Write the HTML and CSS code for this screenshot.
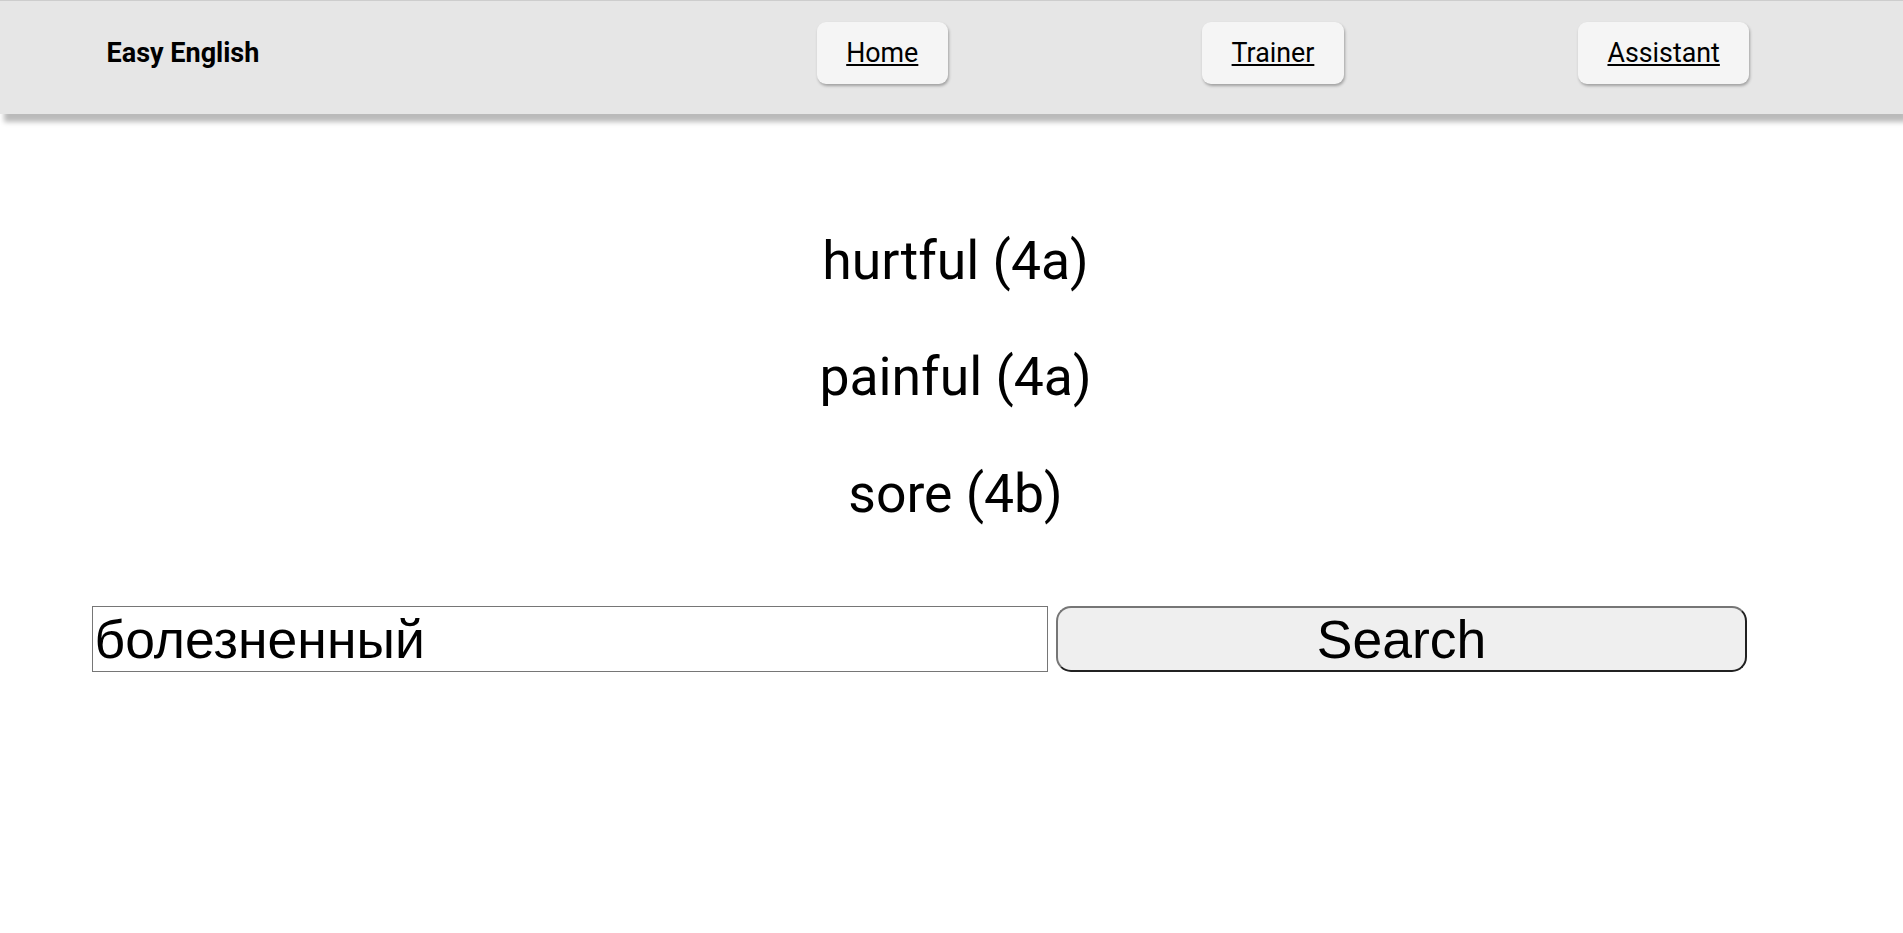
FILE: index.html
```html
<!DOCTYPE html>
<html lang="en">
<head>
<meta charset="utf-8">
<title>Easy English</title>
<link rel="stylesheet" href="styles.css">
</head>
<body>
<header class="topbar">
  <div class="logo">Easy English</div>
  <ul class="nav">
    <li class="nav-item"><a class="nav-btn" href="#">Home</a></li>
    <li class="nav-item"><a class="nav-btn" href="#">Trainer</a></li>
    <li class="nav-item"><a class="nav-btn" href="#">Assistant</a></li>
  </ul>
</header>
<main class="content">
  <div class="words">
    <p class="word">hurtful (4a)</p>
    <p class="word">painful (4a)</p>
    <p class="word">sore (4b)</p>
  </div>
  <form class="search" onsubmit="return false">
    <input class="search-input" type="text" value="болезненный">
    <button class="search-btn" type="submit">Search</button>
  </form>
</main>
</body>
</html>
```
FILE: styles.css
```css
html, body {
  margin: 0;
  padding: 0;
  background: #ffffff;
}

body {
  font-family: Roboto, "Noto Sans", sans-serif;
  color: #000;
}

.topbar {
  display: flex;
  align-items: center;
  justify-content: space-between;
  box-sizing: border-box;
  height: 114px;
  padding: 21px 44px 31px 106.5px;
  background: #e6e6e6;
  border-top: 1px solid #cdcdcd;
  box-shadow: 4px 8px 5px rgba(0, 0, 0, 0.27);
}

.logo {
  font-family: Roboto, sans-serif;
  font-weight: 700;
  font-size: 27px;
  line-height: normal;
}

.nav {
  display: grid;
  grid-template-columns: repeat(3, 390.7px);
  justify-items: center;
  margin: 0;
  padding: 0;
  list-style: none;
}

.nav-item {
  display: block;
}

.nav-btn {
  display: block;
  padding: 15px 29.5px;
  font-size: 26.8px;
  line-height: normal;
  color: #000;
  text-decoration: underline;
  background: #f5f5f5;
  border-radius: 9px;
  box-shadow: 1px 2px 3px rgba(0, 0, 0, 0.3);
}

.content {
  padding-top: 61px;
}

.words {
  text-align: center;
  padding-left: 8px;
}

.word {
  margin: 53.5px 0;
  font-size: 53.5px;
  line-height: normal;
}

.search {
  display: flex;
  align-items: stretch;
  gap: 8.5px;
  margin: 81.5px 0 0 91.5px;
}

.search-input {
  box-sizing: border-box;
  width: 956px;
  height: 66px;
  margin: 0;
  padding: 1px 2px;
  border: 1px solid #767676;
  border-radius: 0;
  font-family: "Liberation Sans", Arial, sans-serif;
  font-size: 53.5px;
  line-height: normal;
  color: #000;
  background: #fff;
  outline: none;
}

.search-btn {
  box-sizing: border-box;
  width: 691px;
  height: 66px;
  margin: 0;
  padding: 0 6px;
  border: 2px outset #767676;
  border-radius: 15px;
  background: #efefef;
  font-family: "Liberation Sans", Arial, sans-serif;
  font-size: 53.5px;
  line-height: normal;
  color: #000;
}
```
